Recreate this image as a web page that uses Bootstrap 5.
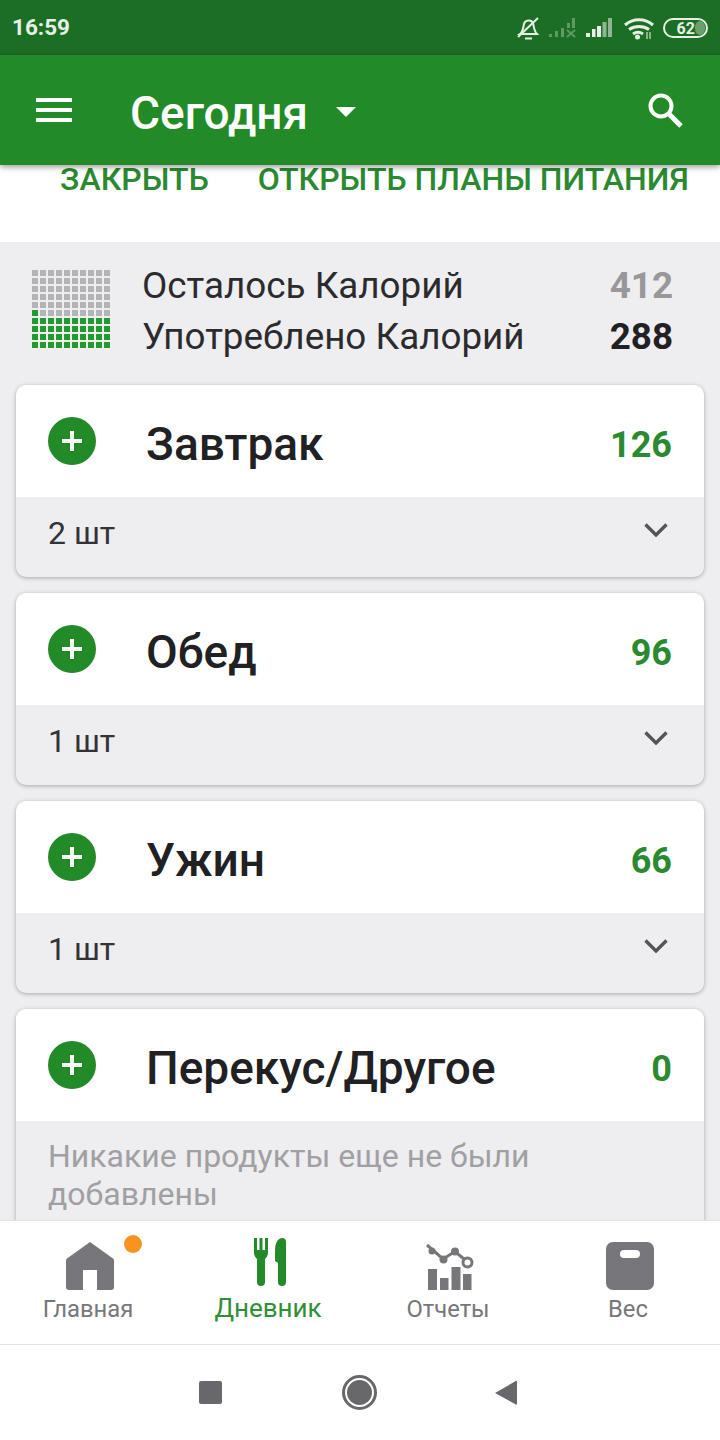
<!DOCTYPE html>
<html lang="ru">
<head>
    <meta charset="UTF-8">
    <meta name="viewport" content="width=device-width, initial-scale=1.0">
    <title>Дневник</title>
    <link rel="stylesheet" href="https://cdn.jsdelivr.net/npm/bootstrap@5.3.0/dist/css/bootstrap.min.css">
    <style>
        body {
            font-family: Roboto, "Liberation Sans", sans-serif;
            background-color: #fff;
            color: #212124;
        }
        .screen { width: 720px; height: 1440px; overflow: hidden; }
        .status-bar {
            height: 55px;
            flex: none;
            background-color: #1c6e24;
            color: #e6f0e6;
            padding: 0 12px;
            font-size: 22.5px;
            font-weight: 700;
        }
        .app-bar {
            height: 110px;
            flex: none;
            background-color: #228b28;
            color: #fff;
            box-shadow: 0 2px 6px rgba(0,0,0,.4);
            position: relative;
            z-index: 2;
            padding: 0 36px;
        }
        .app-title { font-size: 46px; font-weight: 500; margin-left: 58px; margin-top: 6px; line-height: 1; }
        .caret-down {
            width: 0; height: 0; margin-left: 28px; margin-top: 4px;
            border-left: 10.5px solid transparent;
            border-right: 10.5px solid transparent;
            border-top: 10px solid #fff;
        }
        .search-ico { margin-right: 1px; }
        .content { flex: 1 1 auto; min-height: 0; overflow: hidden; background-color: #eeedf0; }
        .plan-links {
            height: 77px;
            background-color: #fff;
            color: #2a8a30;
            font-size: 32px;
            font-weight: 500;
            line-height: 28px;
            padding: 0 0 0 60px;
            gap: 49px;
        }
        .summary { height: 143px; padding: 0 47px 6px 32px; }
        .cal-grid {
            display: grid;
            grid-template-columns: repeat(10, 6px);
            grid-auto-rows: 6px;
            gap: 2px;
            flex: none;
            margin: 0 32px 4px 0;
        }
        .cal-grid span { background-color: #b4b4b6; }
        .cal-grid span.eaten { background-color: #229a2e; }
        .sum-row { font-size: 36.8px; line-height: 51px; color: #2b2b2e; }
        .sum-left { color: #98989b; font-weight: 700; }
        .sum-used { color: #212124; font-weight: 700; }
        .meal-card {
            margin: 0 16px 16px;
            border-radius: 10px;
            overflow: hidden;
            background-color: #eeedf0;
            box-shadow: 0 1px 4px rgba(0,0,0,.3);
        }
        .meal-top { height: 112px; background-color: #fff; padding: 0 32px; }
        .add-dot {
            width: 48px; height: 48px; flex: none;
            border-radius: 50%;
            background-color: #228b28;
        }
        .meal-name { font-size: 46px; font-weight: 500; margin-left: 50px; margin-top: 6px; color: #212124; line-height: 1; }
        .meal-cal { font-size: 36px; font-weight: 700; color: #2a8a30; margin-top: 8px; }
        .meal-bottom { height: 80px; padding: 0 36px 8px 32px; font-size: 32px; color: #333336; }
        .meal-bottom svg { margin-top: -6px; }
        .meal-empty { padding: 16px 32px 40px; font-size: 32px; line-height: 38px; color: #a0a0a3; }
        .tab-bar {
            height: 125px;
            flex: none;
            background-color: #fff;
            border-top: 1px solid #e4e4e6;
            border-bottom: 1px solid #e4e4e6;
            position: relative;
            z-index: 2;
        }
        .tab-item {
            width: 180px;
            color: #77767a;
            font-size: 23.8px;
            line-height: 28px;
            padding-top: 21px;
        }
        .tab-item svg { display: block; margin-bottom: 5px; }
        .tab-label { margin-right: 4px; }
        .tab-item.current { color: #2f8f35; font-size: 26px; }
        .tab-item.current svg { margin-top: -4px; margin-bottom: 8px; }
        .tab-icon-wrap { position: relative; }
        .notify-dot {
            position: absolute;
            width: 18px; height: 18px;
            border-radius: 50%;
            background-color: #f7931e;
            left: 58px; top: -7px;
        }
        .sys-bar { height: 95px; flex: none; background-color: #fff; }
    </style>
</head>
<body>
<div class="screen d-flex flex-column">

    <div class="status-bar d-flex align-items-center justify-content-between">
        <span>16:59</span>
        <svg width="192" height="30" viewBox="516 12 192 30">
            <g stroke="#e6f0e6" fill="none" stroke-width="2">
                <path d="M520 33c3-2 3-6 4-10 1-4 7-5 9-1 1 4 1 8 4 11z"/>
                <path d="M518 36L538 17"/>
                <path d="M525 37.500h7"/>
            </g>
            <g fill="#5f9a65">
                <rect x="549" y="33" width="3" height="3"/>
                <rect x="555" y="30" width="3" height="6"/>
                <rect x="561" y="27" width="3" height="9"/>
                <rect x="567" y="22" width="3" height="5"/>
                <rect x="572" y="17" width="3" height="10"/>
                <path d="M567 29l8 7M575 29l-8 7" stroke="#5f9a65" stroke-width="2"/>
            </g>
            <rect x="586" y="32" width="4" height="4" fill="#e6f0e6"/>
            <rect x="592" y="28" width="3.500" height="8" fill="#e6f0e6"/>
            <rect x="597" y="25" width="4" height="11" fill="#e6f0e6"/>
            <rect x="602.500" y="21" width="4" height="15" fill="#8fb592"/>
            <rect x="608" y="17" width="4" height="19" fill="#8fb592"/>
            <g fill="none" stroke="#e6f0e6" stroke-width="3">
                <path d="M625 24c8-7 20-7 28 0"/>
                <path d="M629 28.500c6-4 14-4 20 0"/>
                <path d="M633 33c3-2 7-2 10 0"/>
            </g>
            <circle cx="637.500" cy="36" r="2.500" fill="#e6f0e6"/>
            <path d="M647 31v7M650 31v7" stroke="#a9c8ab" stroke-width="1.500"/>
            <rect x="664" y="18" width="43" height="18" rx="9" fill="none" stroke="#e6f0e6" stroke-width="2"/>
            <rect x="695" y="20" width="10" height="14" rx="6" fill="#6aa06e"/>
            <text x="676.500" y="33" font-family="Roboto, sans-serif" font-size="16" font-weight="700" fill="#e6f0e6">62</text>
        </svg>
    </div>

    <div class="app-bar d-flex align-items-center">
        <svg width="36" height="24" viewBox="0 0 36 24" fill="#fff">
            <rect y="0" width="36" height="4"/>
            <rect y="10" width="36" height="4"/>
            <rect y="20" width="36" height="4"/>
        </svg>
        <span class="app-title">Сегодня</span>
        <span class="caret-down"></span>
        <svg class="ms-auto search-ico" width="36" height="36" viewBox="0 0 36 36" fill="none" stroke="#fff">
            <circle cx="14" cy="14" r="10.500" stroke-width="4"/>
            <path d="M22 22l12 12" stroke-width="5"/>
        </svg>
    </div>

    <div class="content">
        <div class="plan-links d-flex align-items-start">
            <span>ЗАКРЫТЬ</span>
            <span>ОТКРЫТЬ ПЛАНЫ ПИТАНИЯ</span>
        </div>

        <div class="summary d-flex align-items-center">
            <div class="cal-grid" id="calGrid"></div>
            <div class="flex-grow-1">
                <div class="sum-row d-flex justify-content-between"><span>Осталось Калорий</span><span class="sum-left">412</span></div>
                <div class="sum-row d-flex justify-content-between"><span>Употреблено Калорий</span><span class="sum-used">288</span></div>
            </div>
        </div>

        <div class="meal-card">
            <div class="meal-top d-flex align-items-center">
                <div class="add-dot d-flex align-items-center justify-content-center">
                    <svg width="20" height="20" viewBox="0 0 20 20" fill="#fff"><rect x="8" y="0" width="4" height="20"/><rect x="0" y="8" width="20" height="4"/></svg>
                </div>
                <span class="meal-name">Завтрак</span>
                <span class="meal-cal ms-auto">126</span>
            </div>
            <div class="meal-bottom d-flex align-items-center justify-content-between">
                <span>2 шт</span>
                <svg width="24" height="14" viewBox="0 0 24 14" fill="none" stroke="#555558" stroke-width="3.400"><path d="M1.500 1.500L12 12 22.500 1.500"/></svg>
            </div>
        </div>

        <div class="meal-card">
            <div class="meal-top d-flex align-items-center">
                <div class="add-dot d-flex align-items-center justify-content-center">
                    <svg width="20" height="20" viewBox="0 0 20 20" fill="#fff"><rect x="8" y="0" width="4" height="20"/><rect x="0" y="8" width="20" height="4"/></svg>
                </div>
                <span class="meal-name">Обед</span>
                <span class="meal-cal ms-auto">96</span>
            </div>
            <div class="meal-bottom d-flex align-items-center justify-content-between">
                <span>1 шт</span>
                <svg width="24" height="14" viewBox="0 0 24 14" fill="none" stroke="#555558" stroke-width="3.400"><path d="M1.500 1.500L12 12 22.500 1.500"/></svg>
            </div>
        </div>

        <div class="meal-card">
            <div class="meal-top d-flex align-items-center">
                <div class="add-dot d-flex align-items-center justify-content-center">
                    <svg width="20" height="20" viewBox="0 0 20 20" fill="#fff"><rect x="8" y="0" width="4" height="20"/><rect x="0" y="8" width="20" height="4"/></svg>
                </div>
                <span class="meal-name">Ужин</span>
                <span class="meal-cal ms-auto">66</span>
            </div>
            <div class="meal-bottom d-flex align-items-center justify-content-between">
                <span>1 шт</span>
                <svg width="24" height="14" viewBox="0 0 24 14" fill="none" stroke="#555558" stroke-width="3.400"><path d="M1.500 1.500L12 12 22.500 1.500"/></svg>
            </div>
        </div>

        <div class="meal-card">
            <div class="meal-top d-flex align-items-center">
                <div class="add-dot d-flex align-items-center justify-content-center">
                    <svg width="20" height="20" viewBox="0 0 20 20" fill="#fff"><rect x="8" y="0" width="4" height="20"/><rect x="0" y="8" width="20" height="4"/></svg>
                </div>
                <span class="meal-name">Перекус/Другое</span>
                <span class="meal-cal ms-auto">0</span>
            </div>
            <div class="meal-empty">Никакие продукты еще не были добавлены</div>
        </div>
    </div>

    <div class="tab-bar d-flex">
        <div class="tab-item d-flex flex-column align-items-center">
            <div class="tab-icon-wrap">
                <svg width="48" height="48" viewBox="0 0 48 48" fill="#77767a">
                    <path d="M24 0L47 16.500a3 3 0 0 1 1 2.500V45a3 3 0 0 1-3 3H31V28H17V48H3a3 3 0 0 1-3-3V19a3 3 0 0 1 1-2.500z"/>
                </svg>
                <span class="notify-dot"></span>
            </div>
            <span class="tab-label">Главная</span>
        </div>
        <div class="tab-item current d-flex flex-column align-items-center">
            <svg width="32" height="48" viewBox="0 0 32 48" fill="#228b28">
                <path d="M0 0h3v12h2.500V0h3v12H11V0h3v15c0 3-2 5-3 6v23a4 4 0 0 1-8 0V21c-1-1-3-3-3-6z"/>
                <path d="M28 0a4 4 0 0 1 4 4v40a4 4 0 0 1-8 0V25l-3-2V13C21 5 24 0 28 0z"/>
            </svg>
            <span class="tab-label">Дневник</span>
        </div>
        <div class="tab-item d-flex flex-column align-items-center">
            <svg width="50" height="48" viewBox="0 0 50 48" fill="#77767a">
                <path d="M2 3l16 14 12-7.500 12 10" fill="none" stroke="#77767a" stroke-width="3"/>
                <circle cx="7" cy="9" r="3.500"/><circle cx="18.500" cy="17.500" r="4"/><circle cx="30" cy="9.500" r="4"/>
                <circle cx="42.500" cy="20.500" r="4.500" fill="#fff" stroke="#77767a" stroke-width="3"/>
                <rect x="3" y="27" width="9" height="21"/>
                <rect x="15" y="36" width="8.500" height="12"/>
                <rect x="26.500" y="25" width="9" height="23"/>
                <rect x="38" y="32" width="8.500" height="16"/>
            </svg>
            <span class="tab-label">Отчеты</span>
        </div>
        <div class="tab-item d-flex flex-column align-items-center">
            <svg width="48" height="48" viewBox="0 0 48 48" fill="#77767a">
                <path fill-rule="evenodd" d="M7 0h34a7 7 0 0 1 7 7v34a7 7 0 0 1-7 7H7a7 7 0 0 1-7-7V7a7 7 0 0 1 7-7zM18 8a4 4 0 0 0 0 8h12a4 4 0 0 0 0-8z"/>
            </svg>
            <span class="tab-label">Вес</span>
        </div>
    </div>

    <div class="sys-bar d-flex align-items-center">
        <svg width="720" height="95" viewBox="0 0 720 95" fill="#68676b">
            <rect x="199" y="36" width="23" height="23" rx="2"/>
            <circle cx="359.500" cy="47.500" r="16" fill="none" stroke="#68676b" stroke-width="3"/>
            <circle cx="359.500" cy="47.500" r="12.500"/>
            <path d="M495 48L515 36.500a1 1 0 0 1 2 1V58a1 1 0 0 1-2 1z"/>
        </svg>
    </div>
</div>

<script src="https://cdn.jsdelivr.net/npm/bootstrap@5.3.0/dist/js/bootstrap.bundle.min.js"></script>
<script>
    // 100 cells, the eaten ones fill up from the bottom
    let calGrid = document.getElementById("calGrid");
    for (let i = 0; i < 100; i++) {
        let cell = document.createElement("span");
        if (i === 50 || i >= 60) cell.className = "eaten";
        calGrid.appendChild(cell);
    }
</script>
</body>
</html>
